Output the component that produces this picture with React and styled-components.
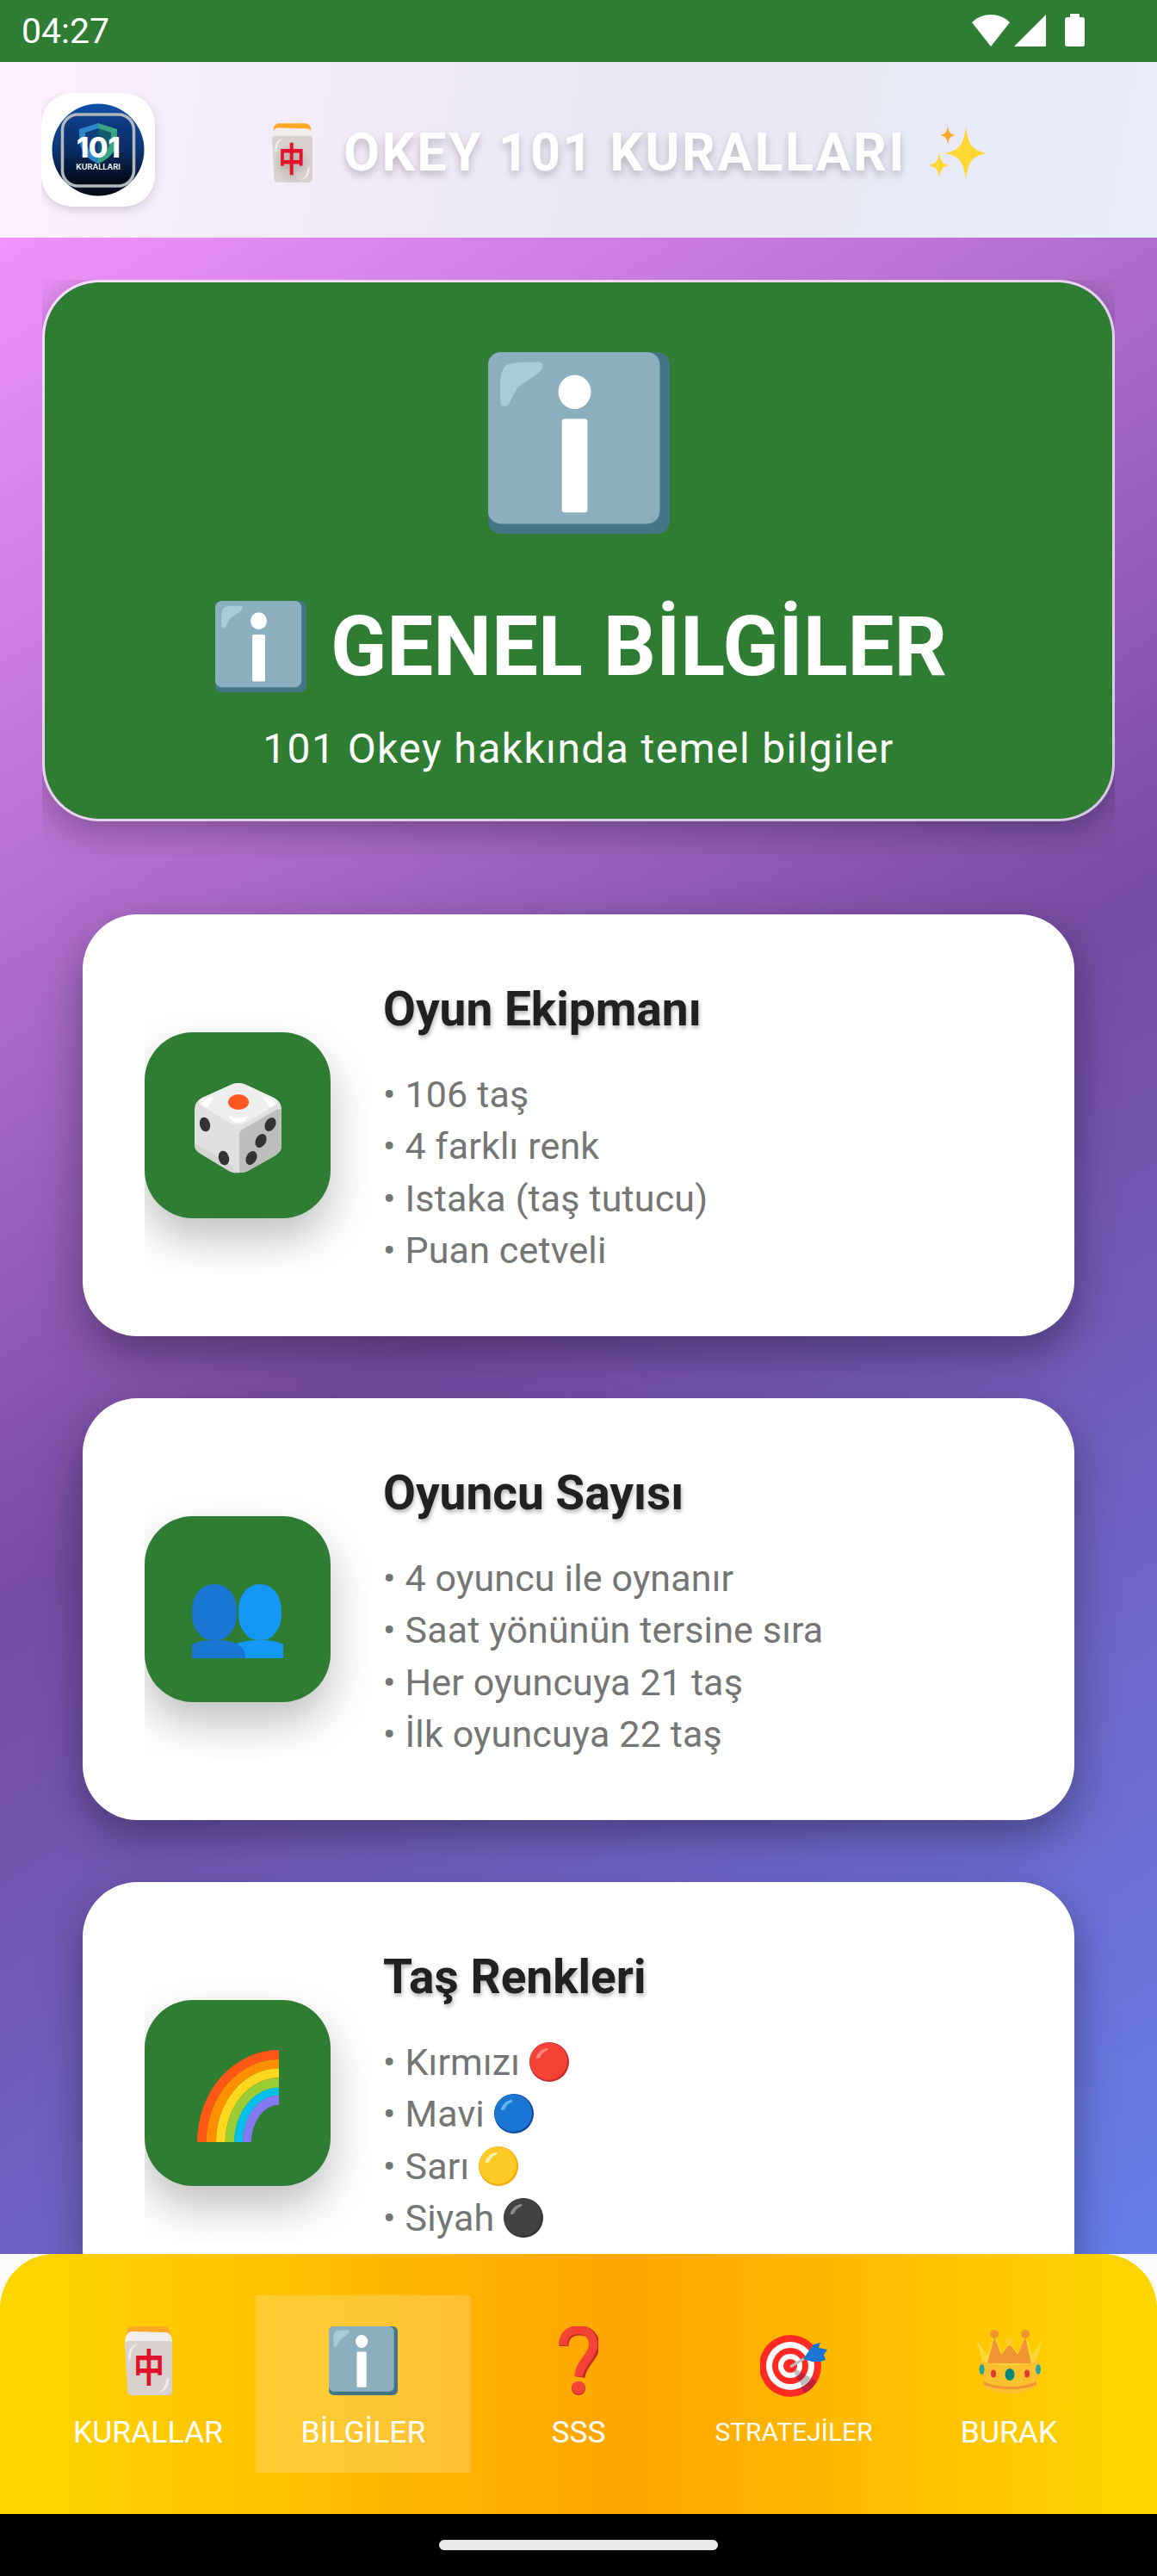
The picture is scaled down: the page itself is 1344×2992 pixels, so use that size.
import styled, { createGlobalStyle } from "styled-components";

const Global = createGlobalStyle`
  html, body { margin: 0; padding: 0; background: #fafafa; }
  body { font-family: Roboto, "Liberation Sans", sans-serif; }
`;

const Screen = styled.div`
  width: 1344px;
  height: 2992px;
  display: flex;
  flex-direction: column;
  overflow: hidden;
  background: #fafafa;
`;

const StatusBar = styled.div`
  height: 72px;
  flex: none;
  background: #2e7d32;
  display: flex;
  align-items: center;
  justify-content: space-between;
  padding: 0 84px 0 25px;
`;

const Clock = styled.span`
  color: #fff;
  font-size: 41px;
  font-weight: 400;
`;

const StatusIcons = styled.div`
  display: flex;
  align-items: center;
  gap: 5px;
  margin-top: -2px;
`;

const Header = styled.header`
  height: 204px;
  flex: none;
  display: flex;
  align-items: center;
  padding: 0 62px 0 48px;
  background: linear-gradient(100deg, #fcf1ff, #e9e6f3 55%, #e8edfa);
`;

const Logo = styled.div`
  width: 132px;
  height: 132px;
  flex: none;
  border-radius: 36px;
  background: #fff;
  box-shadow: 0 4px 12px rgba(0, 0, 0, 0.15);
  clip-path: inset(0 -12px -12px 0);
  display: flex;
  align-items: center;
  justify-content: center;
`;

const AppTitle = styled.div`
  flex: 1;
  display: flex;
  align-items: center;
  justify-content: center;
  margin-top: 6px;
  color: #fff;
  font-size: 60.5px;
  font-weight: 700;
  letter-spacing: 2.6px;
  text-shadow: 0 5px 10px rgba(0, 0, 0, 0.22);
  white-space: nowrap;
`;

const AppTitleText = styled.span`
  margin: 0 26px 0 36px;
`;

const Scroll = styled.main`
  flex: 1;
  min-height: 0;
  overflow: hidden;
  background: linear-gradient(148deg, #f093fb 0%, #764ba2 50%, #667eea 100%);
  padding: 49px 49px 0;
`;

const Hero = styled.section`
  box-sizing: border-box;
  height: 629px;
  border: 3px solid rgba(255, 255, 255, 0.7);
  border-radius: 66px;
  background: #2e7d32;
  background-clip: padding-box;
  box-shadow: 0 10px 40px rgba(0, 0, 0, 0.3);
  clip-path: inset(0 0 -40px 0);
  display: flex;
  flex-direction: column;
  align-items: center;
  padding-top: 81px;
  color: #fff;
`;

const HeroTitle = styled.h1`
  margin: 78px 0 0;
  padding-left: 6px;
  display: flex;
  align-items: center;
  gap: 28px;
  font-size: 96px;
  font-weight: 700;
  line-height: 106px;
`;

const HeroSub = styled.p`
  margin: 36px 0 0;
  font-size: 48px;
  line-height: 60px;
  letter-spacing: 1.4px;
`;

const Cards = styled.div`
  margin: 108px 47px 0;
  display: flex;
  flex-direction: column;
  gap: 72px;
`;

const Card = styled.article`
  box-sizing: border-box;
  height: 490px;
  flex: none;
  border-radius: 64px;
  background: #fff;
  box-shadow: 0 20px 50px rgba(0, 0, 0, 0.35);
  display: flex;
  align-items: center;
  gap: 61px;
  padding: 0 72px;
`;

const Tile = styled.div`
  box-sizing: border-box;
  width: 216px;
  height: 216px;
  flex: none;
  border-radius: 56px;
  background: #2e7d32;
  box-shadow: 0 24px 50px rgba(0, 0, 0, 0.25);
  clip-path: inset(-30px -46px -65px 0);
  padding-top: ${(p) => p.$nudge}px;
  display: flex;
  align-items: center;
  justify-content: center;
`;

const CardBody = styled.div`
  display: flex;
  flex-direction: column;
  padding-top: 4px;
`;

const CardTitle = styled.h2`
  margin: 0 0 33px;
  color: #212121;
  font-size: 55px;
  font-weight: 700;
  line-height: 72px;
  text-shadow: 1px 3px 5px rgba(0, 0, 0, 0.3);
`;

const Line = styled.div`
  display: flex;
  align-items: center;
  gap: 11px;
  height: 60.2px;
  color: #757575;
  font-size: 43px;
  letter-spacing: 0.15px;
  white-space: nowrap;
`;

const TabBar = styled.nav`
  height: 302px;
  flex: none;
  border-radius: 63px 63px 0 0;
  background: linear-gradient(90deg, #ffd700, #ffa500 54%, #ffd700);
  box-sizing: border-box;
  padding: 48px 47px 0;
  display: flex;
  align-items: flex-start;
`;

const Tab = styled.div`
  width: 250px;
  height: 206px;
  flex: none;
  display: flex;
  flex-direction: column;
  align-items: center;
  background: ${(p) => (p.$active ? "rgba(255, 255, 255, 0.2)" : "transparent")};
`;

const TabIcon = styled.div`
  height: 80px;
  margin-top: 36px;
  display: flex;
  align-items: flex-end;
  justify-content: center;

  & > svg {
    margin-bottom: ${(p) => p.$lift || 0}px;
  }
`;

const TabLabel = styled.span`
  margin-top: 24px;
  color: #fff;
  font-size: ${(p) => (p.$small ? "30px" : "35.5px")};
  line-height: 38px;
`;

const NavBar = styled.div`
  height: 72px;
  flex: none;
  background: #000;
  display: flex;
  justify-content: center;
  padding-top: 30px;
  box-sizing: border-box;
`;

const Handle = styled.div`
  width: 324px;
  height: 12px;
  border-radius: 6px;
  background: #eaeaea;
`;

const Svg = styled.svg`
  display: block;
  flex: none;
`;

const BatterySvg = styled(Svg)`
  margin-left: 17px;
`;

const Wifi = () => (
  <Svg width="44" height="37" viewBox="0 0 44 37">
    <path d="M22 37 0 9C6 3 14 0 22 0s16 3 22 9Z" fill="#fff" />
  </Svg>
);

const Signal = () => (
  <Svg width="37" height="37" viewBox="0 0 37 37">
    <path d="M37 0v37H0Z" fill="#fff" />
  </Svg>
);

const Battery = () => (
  <BatterySvg width="23" height="38" viewBox="0 0 23 38">
    <path d="M6 0h11v4h3a3 3 0 0 1 3 3v28a3 3 0 0 1-3 3H3a3 3 0 0 1-3-3V7a3 3 0 0 1 3-3h3Z" fill="#fff" />
  </BatterySvg>
);

const LogoMark = () => (
  <Svg width="132" height="132" viewBox="0 0 132 132">
    <defs>
      <linearGradient id="logoBall" x1="0" y1="0" x2="0" y2="1">
        <stop offset="0" stopColor="#0f4fa8" />
        <stop offset="0.45" stopColor="#0c3a7c" />
        <stop offset="1" stopColor="#020814" />
      </linearGradient>
      <linearGradient id="logoFace" x1="0" y1="0" x2="0" y2="1">
        <stop offset="0" stopColor="#0f3f8e" />
        <stop offset="0.5" stopColor="#0a2c62" />
        <stop offset="1" stopColor="#01050f" />
      </linearGradient>
    </defs>
    <circle cx="66" cy="66" r="53.5" fill="url(#logoBall)" />
    <rect x="24.5" y="25" width="83" height="83" rx="18" fill="url(#logoFace)" stroke="#b4b8bc" strokeWidth="3.5" />
    <path d="M44 42 66 35v47C56 78 50 72 47 66c-3-8-3-16-3-24Z" fill="#2d86c9" />
    <path d="M88 42 66 35v47c10-4 16-10 19-16 3-8 3-16 3-24Z" fill="#37a583" />
    <path d="M51 46 66 41v33c-6-3-10-7-12-11-3-5-3-11-3-17Z" fill="#0d3f7f" />
    <path d="M81 46 66 41v33c6-3 10-7 12-11 3-5 3-11 3-17Z" fill="#0f5a6c" />
    <text x="66" y="75" textAnchor="middle" fill="#fff" fontFamily="Inter, Roboto, sans-serif" fontWeight="800" fontSize="33" letterSpacing="-0.5">
      101
    </text>
    <text x="66" y="89" textAnchor="middle" fill="#fff" fontFamily="Inter, Roboto, sans-serif" fontWeight="600" fontSize="9.2">
      KURALLARI
    </text>
  </Svg>
);

const InfoIcon = ({ size }) => (
  <Svg width={size} height={size} viewBox="0 0 128 128">
    <rect width="128" height="128" rx="9" fill="#427687" />
    <rect width="121" height="121" rx="9" fill="#8cafbf" />
    <path d="M9 37C8 25 8 14 12 10c3-3 13-3 24-3 4 1 3 4 0 7-8 7-14 8-17 14-4 7-4 10-7 10-2 0-3 0-3-1Z" fill="#a8ccda" />
    <ellipse cx="61" cy="28" rx="11.5" ry="12" fill="#fff" />
    <rect x="52" y="47" width="18" height="66" rx="2" fill="#fff" />
  </Svg>
);

const MahjongIcon = ({ width, height }) => (
  <Svg width={width} height={height} viewBox="0 0 55 80">
    <path d="M2 10C2 3 5 0 10 0h34c6 0 9 3 9 10v8H2Z" fill="#ffa726" />
    <path d="M0 20c0-9 3-14 9-14 12 0 28 1 38 1 5 0 8 4 8 12v6H0Z" fill="#f1eded" />
    <path d="M0 20c0-2 2-3 4-3h47c3 0 4 1 4 3v55c0 3-2 5-5 5H8c-3 0-5-2-5-5Z" fill="#d9d1ce" />
    <path d="M4 38c0-10 2-16 11-18-5 4-8 9-8 14s-3 6-3 4Z" fill="#f1eded" />
    <path d="M51 61c0 8-3 15-13 16 6-2 9-7 10-13 0-3 3-5 3-3Z" fill="#f1eded" />
    <text
      x="0"
      y="0"
      transform="translate(28 65) scale(1 1.25)"
      textAnchor="middle"
      fill="#e2122d"
      fontFamily="'Noto Sans CJK SC', sans-serif"
      fontWeight="700"
      fontSize="36"
    >
      中
    </text>
  </Svg>
);

const star = (cx, cy, rx, ry) =>
  `M${cx} ${cy - ry}C${cx + rx * 0.12} ${cy - ry * 0.3} ${cx + rx * 0.3} ${cy - ry * 0.12} ${cx + rx} ${cy}C${cx + rx * 0.3} ${cy + ry * 0.12} ${cx + rx * 0.12} ${cy + ry * 0.3} ${cx} ${cy + ry}C${cx - rx * 0.12} ${cy + ry * 0.3} ${cx - rx * 0.3} ${cy + ry * 0.12} ${cx - rx} ${cy}C${cx - rx * 0.3} ${cy - ry * 0.12} ${cx - rx * 0.12} ${cy - ry * 0.3} ${cx} ${cy - ry}Z`;

const Sparkles = () => (
  <Svg width="67" height="62" viewBox="0 0 67 62">
    <path d={star(43, 32, 24, 31)} fill="#fdd835" />
    <path d={star(22, 11, 9, 11)} fill="#f9a825" />
    <path d={star(12, 46, 12, 15)} fill="#fdd835" />
  </Svg>
);

const QuestionIcon = () => (
  <Svg width="46" height="80" viewBox="0 0 46 80">
    <path d="M6 23C6 11 14 5 24 5c11 0 18 7 18 17 0 14-15 20-17 37" fill="none" stroke="#c62828" strokeWidth="11" />
    <path d="M5 22C5 10 13 4 23 4c10 0 17 7 17 17 0 14-15 20-17 37" fill="none" stroke="#f44336" strokeWidth="10" />
    <ellipse cx="23" cy="72" rx="8" ry="8" fill="#c62828" />
    <ellipse cx="23" cy="71.5" rx="7.5" ry="7.5" fill="#f44336" />
  </Svg>
);

const TargetIcon = () => (
  <Svg width="78" height="74" viewBox="0 0 78 74">
    <circle cx="35" cy="37" r="36" fill="#ff2a23" />
    <path d="M35 37 66 55A36 36 0 0 1 51 69Z" fill="#c2203b" />
    <circle cx="35" cy="37" r="28" fill="#fff" />
    <path d="M35 37 59 51A28 28 0 0 1 49 61Z" fill="#bdbdbd" />
    <circle cx="35" cy="37" r="21" fill="#ff2a23" />
    <path d="M35 37 53 47A21 21 0 0 1 45 55Z" fill="#c2203b" />
    <circle cx="35" cy="37" r="14" fill="#fff" />
    <path d="M35 37 47 44A14 14 0 0 1 42 49Z" fill="#bdbdbd" />
    <circle cx="35" cy="37" r="8" fill="#ff2a23" />
    <path d="M35 38 52 28" stroke="#bdbdbd" strokeWidth="3" />
    <path d="M50 29 62 12 70 10 68 16 78 18 74 24 76 30 70 32 60 32Z" fill="#1976d2" />
  </Svg>
);

const CrownIcon = () => (
  <Svg width="77" height="75" viewBox="0 0 77 75">
    <path d="M0 12 9 44h59l9-32-12 18-8-25-9 23-9-14-9 14-9-23-8 25Z" fill="#fdd835" />
    <path d="M13 40 21 9l8 21 10-13 9 13 9-21 7 31Z" fill="#f19534" />
    <circle cx="21" cy="6" r="5" fill="#f19534" />
    <circle cx="57" cy="6" r="5" fill="#f19534" />
    <circle cx="39" cy="15" r="5" fill="#ffca28" />
    <path d="M4 36C12 40 24 42 39 42s27-2 34-6l-1 20-4 12c-6 5-18 7-29 7s-22-2-29-7L8 56Z" fill="#fbc02d" />
    <path d="M9 61c8 4 19 6 31 6s22-2 30-6v4c-8 3-18 5-30 5S17 68 9 65Z" fill="#f19534" />
    <ellipse cx="6.5" cy="47" rx="3" ry="6" fill="#26a69a" />
    <ellipse cx="20" cy="52" rx="3" ry="4.5" fill="#e53935" />
    <ellipse cx="39" cy="53" rx="5.5" ry="7" fill="#00897b" />
    <ellipse cx="59" cy="52" rx="3" ry="4.5" fill="#e53935" />
    <ellipse cx="72" cy="47" rx="3" ry="6" fill="#26a69a" />
  </Svg>
);

const DiceIcon = () => (
  <Svg width="101" height="106" viewBox="0 0 101 106">
    <path d="M51 0c4 0 7 1 11 3l30 14c6 3 9 7 9 15v40c0 6-2 8-7 12l-32 18c-6 3-16 3-22 0L7 82c-5-3-7-6-7-12V32c0-8 3-12 9-15L40 3c4-2 7-3 11-3Z" fill="#e0e0e0" />
    <path d="M50 104c-3-2-5-4-6-8L2 71c-1 0-2-1-2-1 0 6 2 9 7 12l33 20c4 2 7 3 10 2Z" fill="#d4d4d4" />
    <path d="M52 104V62c0-4 1-7 5-9l38-22c4-1 6-1 6 1v40c0 6-2 8-7 12l-32 18c-4 2-7 2-10 2Z" fill="#bdbdbd" />
    <path d="M51 0c4 0 7 1 11 3l30 14c4 2 6 6 1 9L60 46c-6 3-13 3-19 0L8 26c-5-3-3-7 1-9L40 3c4-2 7-3 11-3Z" fill="#eeeeee" />
    <path d="M39 38c8 3 16 3 24 0-4 6-8 8-12 8s-8-2-12-8ZM8 24c3-5 8-8 15-8-4 4-5 9-8 12-2 1-5-1-7-4ZM94 24c-3-5-8-8-15-8 4 4 5 9 8 12 2 1 5-1 7-4Z" fill="#fff" />
    <ellipse cx="51" cy="22" rx="12" ry="9" fill="#ff5722" />
    <ellipse cx="12" cy="48" rx="6" ry="8.5" fill="#333" transform="rotate(-15 12 48)" />
    <ellipse cx="34" cy="87" rx="6" ry="8.5" fill="#333" transform="rotate(-15 34 87)" />
    <ellipse cx="88" cy="48" rx="6" ry="8.5" fill="#333" transform="rotate(28 88 48)" />
    <ellipse cx="77" cy="67" rx="6" ry="8.5" fill="#333" transform="rotate(28 77 67)" />
    <ellipse cx="66" cy="87" rx="6" ry="8.5" fill="#333" transform="rotate(28 66 87)" />
  </Svg>
);

const PeopleIcon = () => (
  <Svg width="106" height="86" viewBox="0 0 106 86">
    <path d="M54 32c0-20 11-32 25-32s25 12 25 32c0 15-3 19-7 24-3 6-9 9-18 9s-15-3-18-9c-4-5-7-9-7-24Z" fill="#1597f5" />
    <path d="M50 70c8-4 19-5 29-5 11 0 20 1 27 5v16H50Z" fill="#1597f5" />
    <path d="M0 32c0-20 11-32 26-32s26 12 26 32c0 15-3 19-7 24-3 6-10 9-19 9s-16-3-19-9c-4-5-7-9-7-24Z" fill="#1976d2" />
    <path d="M0 70c8-4 17-5 26-5 16 0 33 2 36 18v3H0Z" fill="#1976d2" />
  </Svg>
);

const rainbowBands = [
  ["#ff5716", 95, 107, 84.3, 96],
  ["#ff8f00", 84.3, 96, 73, 85.7],
  ["#fdd81e", 73, 85.7, 62.3, 74.7],
  ["#9ccc33", 62.3, 74.7, 51.7, 63.3],
  ["#03bfec", 51.7, 63.3, 42, 54.3],
  ["#8578f5", 42, 54.3, 32, 43.3],
];

const RainbowIcon = () => (
  <Svg width="95" height="107" viewBox="0 0 95 107">
    {rainbowBands.map(([color, rx, ry, ix, iy]) => (
      <path
        key={color}
        fill={color}
        d={`M${95 - rx} 107A${rx} ${ry} 0 0 1 95 ${107 - ry}V${107 - iy}A${ix} ${iy} 0 0 0 ${95 - ix} 107Z`}
      />
    ))}
  </Svg>
);

const dotColors = {
  red: ["#f44336", "#c62828", "#ff8a80"],
  blue: ["#1976d2", "#0d47a1", "#64b5f6"],
  yellow: ["#ffca28", "#f4a800", "#fff3b0"],
  black: ["#424242", "#333333", "#8a8a8a"],
};

const ColorDot = ({ color }) => {
  const [fill, rim, shine] = dotColors[color];
  return (
    <Svg width="46" height="46" viewBox="0 0 46 46">
      <circle cx="23" cy="23" r="23" fill={rim} />
      <circle cx="22.2" cy="22.2" r="21.8" fill={fill} />
      <path d="M8 17c2-5 6-9 12-10 2 0 2 2 0 3-4 1-6 4-8 8-2 2-5 1-4-1Z" fill={shine} />
    </Svg>
  );
};

const cards = [
  {
    title: "Oyun Ekipmanı",
    icon: <DiceIcon />,
    nudge: 8,
    lines: [{ text: "• 106 taş" }, { text: "• 4 farklı renk" }, { text: "• Istaka (taş tutucu)" }, { text: "• Puan cetveli" }],
  },
  {
    title: "Oyuncu Sayısı",
    icon: <PeopleIcon />,
    nudge: 28,
    lines: [
      { text: "• 4 oyuncu ile oynanır" },
      { text: "• Saat yönünün tersine sıra" },
      { text: "• Her oyuncuya 21 taş" },
      { text: "• İlk oyuncuya 22 taş" },
    ],
  },
  {
    title: "Taş Renkleri",
    icon: <RainbowIcon />,
    nudge: 6,
    lines: [
      { text: "• Kırmızı", dot: "red" },
      { text: "• Mavi", dot: "blue" },
      { text: "• Sarı", dot: "yellow" },
      { text: "• Siyah", dot: "black" },
    ],
  },
];

const tabs = [
  { label: "KURALLAR", icon: <MahjongIcon width={55} height={80} /> },
  { label: "BİLGİLER", icon: <InfoIcon size={80} />, active: true },
  { label: "SSS", icon: <QuestionIcon /> },
  { label: "STRATEJİLER", icon: <TargetIcon />, small: true, lift: -3 },
  { label: "BURAK", icon: <CrownIcon />, lift: 2 },
];

export default function App() {
  return (
    <Screen>
      <Global />
      <StatusBar>
        <Clock>04:27</Clock>
        <StatusIcons>
          <Wifi />
          <Signal />
          <Battery />
        </StatusIcons>
      </StatusBar>
      <Header>
        <Logo>
          <LogoMark />
        </Logo>
        <AppTitle>
          <MahjongIcon width={47} height={71} />
          <AppTitleText>OKEY 101 KURALLARI</AppTitleText>
          <Sparkles />
        </AppTitle>
      </Header>
      <Scroll>
        <Hero>
          <InfoIcon size={211} />
          <HeroTitle>
            <InfoIcon size={106} />
            <span>GENEL BİLGİLER</span>
          </HeroTitle>
          <HeroSub>101 Okey hakkında temel bilgiler</HeroSub>
        </Hero>
        <Cards>
          {cards.map((card) => (
            <Card key={card.title}>
              <Tile $nudge={card.nudge}>{card.icon}</Tile>
              <CardBody>
                <CardTitle>{card.title}</CardTitle>
                {card.lines.map((line) => (
                  <Line key={line.text}>
                    {line.text}
                    {line.dot && <ColorDot color={line.dot} />}
                  </Line>
                ))}
              </CardBody>
            </Card>
          ))}
        </Cards>
      </Scroll>
      <TabBar>
        {tabs.map((tab) => (
          <Tab key={tab.label} $active={tab.active}>
            <TabIcon $lift={tab.lift}>{tab.icon}</TabIcon>
            <TabLabel $small={tab.small}>{tab.label}</TabLabel>
          </Tab>
        ))}
      </TabBar>
      <NavBar>
        <Handle />
      </NavBar>
    </Screen>
  );
}
